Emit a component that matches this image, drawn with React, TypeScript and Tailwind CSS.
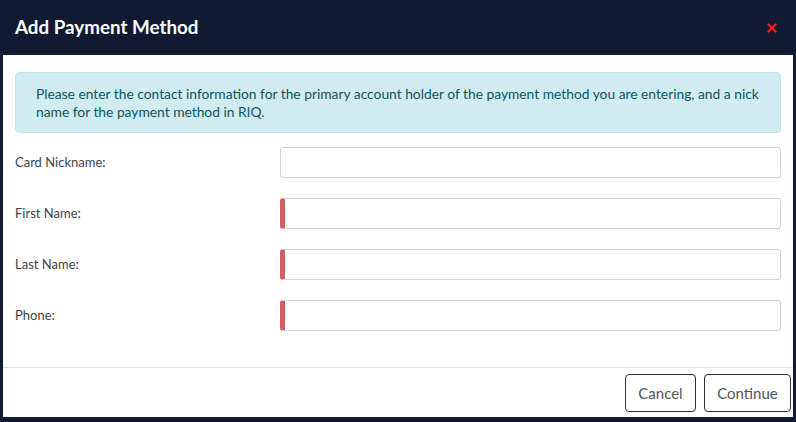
import { X } from "lucide-react";

const fields = [
  { label: "Card Nickname:", required: false },
  { label: "First Name:", required: true },
  { label: "Last Name:", required: true },
  { label: "Phone:", required: true },
];

function FieldRow({ label, required }: { label: string; required: boolean }) {
  return (
    <div className="flex h-[31px] items-center">
      <label className="w-[265px] shrink-0 text-[13px] text-[#444]">{label}</label>
      <div
        className={`h-[31px] flex-1 rounded-[3px] border border-[#ced4da] bg-white ${
          required ? "border-l-[5px] border-l-[#d26060]" : ""
        }`}
      />
    </div>
  );
}

export default function App() {
  return (
    <div
      className="flex h-[422px] w-[796px] flex-col bg-[#101b33]"
      style={{ fontFamily: "Lato, 'Noto Sans', sans-serif" }}
    >
      <div className="flex h-[55px] shrink-0 items-center justify-between pl-[15px] pr-[17px]">
        <h1 className="text-[18.8px] font-bold text-white">Add Payment Method</h1>
        <X className="h-[14px] w-[14px] text-[#ff1a1a]" strokeWidth={4} />
      </div>

      <div className="mx-[3px] flex h-[362px] flex-col bg-white">
        <div className="flex flex-1 flex-col px-[12px] pt-[17px]">
          <div className="rounded-[4px] border border-[#bee5eb] bg-[#d1ecf1] px-[20px] pb-[11px] pt-[12px] text-[13.8px] leading-[18px] text-[#0c5460]">
            <span className="whitespace-nowrap">
              Please enter the contact information for the primary account holder of the payment
              method you are entering, and a nick
            </span>
            <br />
            name for the payment method in RIQ.
          </div>
          <div className="mt-[14px] flex flex-col gap-[20px]">
            {fields.map((f) => (
              <FieldRow key={f.label} label={f.label} required={f.required} />
            ))}
          </div>
        </div>
        <div className="flex h-[50px] shrink-0 items-start justify-end gap-[8px] border-t border-[#dee2e6] pr-[2px] pt-[6px]">
          <button className="h-[38px] w-[71px] rounded-[4px] border border-[#333] text-[15px] text-[#555]">
            Cancel
          </button>
          <button className="h-[38px] w-[87px] rounded-[4px] border border-[#333] text-[15px] text-[#555]">
            Continue
          </button>
        </div>
      </div>
    </div>
  );
}
